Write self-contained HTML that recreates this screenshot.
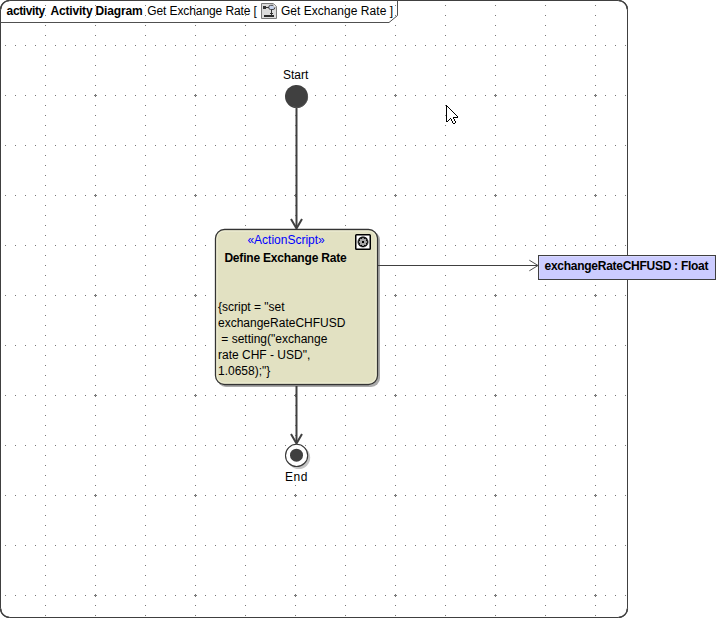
<!DOCTYPE html>
<html><head><meta charset="utf-8">
<style>
html,body{margin:0;padding:0;background:#fff;width:716px;height:618px;overflow:hidden}
svg{display:block}
text{font-family:"Liberation Sans",sans-serif;font-size:12px}
</style></head><body>
<svg width="716" height="618" viewBox="0 0 716 618">
<defs>
<pattern id="gh" x="0" y="0" width="10" height="50" patternUnits="userSpaceOnUse"><rect x="5" y="45" width="1" height="1" fill="#777"/></pattern>
<pattern id="gv" x="0" y="0" width="50" height="10" patternUnits="userSpaceOnUse"><rect x="45" y="5" width="1" height="1" fill="#777"/></pattern>
<pattern id="gp" x="0" y="0" width="100" height="100" patternUnits="userSpaceOnUse"><rect x="94" y="95" width="3" height="1" fill="#777"/><rect x="95" y="94" width="1" height="3" fill="#777"/></pattern>
</defs>
<g shape-rendering="crispEdges">
<rect x="1" y="1" width="625" height="616" fill="url(#gh)"/>
<rect x="1" y="1" width="625" height="616" fill="url(#gv)"/>
<rect x="1" y="1" width="625" height="616" fill="url(#gp)"/>
</g>
<!-- frame -->
<rect x="0.5" y="0.5" width="627" height="617" rx="9" ry="9" fill="none" stroke="#404040" stroke-width="1"/>
<path d="M0.6 9.5 A8.9 8.9 0 0 1 9.5 0.6 M618.5 0.6 A8.9 8.9 0 0 1 627.4 9.5 M627.4 608.5 A8.9 8.9 0 0 1 618.5 617.4 M9.5 617.4 A8.9 8.9 0 0 1 0.6 608.5" fill="none" stroke="#404040" stroke-width="1.5"/>
<path d="M0.5 22.5 H389 L397.5 15.5 V0.5" fill="none" stroke="#505050" stroke-width="1"/>
<text id="t1" x="6.6" textLength="38.66" lengthAdjust="spacing" y="15" font-weight="bold">activity</text>
<text id="t2" x="50.4" textLength="92.20" lengthAdjust="spacing" y="15" font-weight="bold">Activity Diagram</text>
<text id="t3" x="147.3" textLength="109.6" lengthAdjust="spacing" y="15">Get Exchange Rate [</text>
<text id="t4" x="280.9" textLength="112.21" lengthAdjust="spacing" y="15">Get Exchange Rate ]</text>
<!-- header icon -->
<g>
<path d="M261.5 3.5 H273.5 L276.5 6.5 V18.5 H261.5 Z" fill="#dcdcdc" stroke="#7a7a7a"/>
<path d="M273 3 L277 7 V3 Z" fill="#fff"/>
<g shape-rendering="crispEdges">
<rect x="263" y="6" width="3" height="3" fill="#333"/>
<rect x="266" y="7" width="3" height="1" fill="#333"/>
<rect x="271" y="10" width="1" height="5" fill="#333"/>
<rect x="270" y="13" width="3" height="1" fill="#333"/>
<rect x="264" y="15" width="10" height="2" fill="#2a2a2a"/>
</g>
<rect x="268.8" y="5.3" width="6" height="4.2" rx="1.8" fill="#c8d4ee" stroke="#333" stroke-width="0.9"/>
<path d="M273.5 3.5 V7 H276.5 Z" fill="#fff" stroke="#bbb" stroke-width="0.8"/>
<path d="M273.5 3.5 L276.8 6.8" stroke="#888" fill="none" stroke-width="0.9"/>
</g>
<!-- start -->
<text id="t5" x="283" y="79">Start</text>
<circle cx="296.5" cy="96.5" r="11.5" fill="#404040"/>
<path d="M307.2 94 A10.6 10.6 0 0 1 293 106.6" fill="none" stroke="#5c5c5c" stroke-width="0.7"/>
<line x1="296.5" y1="108" x2="296.5" y2="228" stroke="#404040" stroke-width="2"/>
<path d="M291 219 L296.5 228.5 L302 219" fill="none" stroke="#404040" stroke-width="2"/>
<!-- action -->
<rect x="217" y="231" width="163" height="156" rx="9" fill="#aaa"/>
<rect x="215.5" y="229.5" width="162" height="155" rx="9" fill="#e2e1c2" stroke="#333" stroke-width="1.3"/>
<rect x="217" y="231" width="159" height="152" rx="7.5" fill="none" stroke="#eeeed6" stroke-width="1"/>
<text id="t6" x="247.4" textLength="77.38" lengthAdjust="spacing" y="244" fill="#0000ff">«ActionScript»</text>
<text id="t7" x="224.4" textLength="122.25" lengthAdjust="spacing" y="262" font-weight="bold">Define Exchange Rate</text>
<text id="t8" x="218" y="311">{script = "set</text>
<text id="t9" x="218" y="327">exchangeRateCHFUSD</text>
<text id="t10" x="218" y="343" xml:space="preserve" style="white-space:pre"> = setting("exchange</text>
<text id="t11" x="218" y="359">rate CHF - USD",</text>
<text id="t12" x="218" y="375">1.0658);"}</text>
<!-- gear icon -->
<rect x="355.75" y="234.75" width="14.5" height="14.5" rx="0.8" fill="#fff" stroke="#000" stroke-width="1.5"/>
<path d="M367.78 240.83 L367.78 242.97 L366.65 243.27 L366.55 243.51 L367.14 244.53 L365.63 246.04 L364.61 245.45 L364.37 245.55 L364.07 246.68 L361.93 246.68 L361.63 245.55 L361.39 245.45 L360.37 246.04 L358.86 244.53 L359.45 243.51 L359.35 243.27 L358.22 242.97 L358.22 240.83 L359.35 240.53 L359.45 240.29 L358.86 239.27 L360.37 237.76 L361.39 238.35 L361.63 238.25 L361.93 237.12 L364.07 237.12 L364.37 238.25 L364.61 238.35 L365.63 237.76 L367.14 239.27 L366.55 240.29 L366.65 240.53 Z" fill="#a8a8a8" stroke="#000" stroke-width="1.15"/>
<rect x="362" y="241" width="2" height="2" fill="#000"/>
<!-- bottom flow -->
<line x1="296.5" y1="386" x2="296.5" y2="443" stroke="#404040" stroke-width="2"/>
<path d="M291 434 L296.5 443.5 L302 434" fill="none" stroke="#404040" stroke-width="2"/>
<!-- end -->
<circle cx="298.8" cy="457.6" r="11.4" fill="#c4c4c4"/>
<circle cx="296.6" cy="455.4" r="11.1" fill="#fff" stroke="#383838" stroke-width="1.1"/>
<circle cx="296.5" cy="455.2" r="6.5" fill="#404040"/>
<text id="t13" x="285" textLength="22.36" lengthAdjust="spacing" y="481">End</text>
<!-- object flow -->
<line x1="378" y1="265.5" x2="538" y2="265.5" stroke="#404040" stroke-width="1"/>
<path d="M529.3 260.2 L538 265.5 L529.3 270.8" fill="none" stroke="#505050" stroke-width="1"/>
<rect x="538.5" y="255.5" width="177" height="24" fill="#ccccff" stroke="#404040"/>
<path d="M539.5 278 V256.5 H714" fill="none" stroke="#d8d8ff"/>
<text id="t14" x="544.5" textLength="164.00" lengthAdjust="spacing" y="270" font-weight="bold">exchangeRateCHFUSD : Float</text>
<!-- cursor -->
<g shape-rendering="crispEdges"><path d="M447 107h1v1h-1zM447 108h2v1h-2zM447 109h3v1h-3zM447 110h4v1h-4zM447 111h5v1h-5zM447 112h6v1h-6zM447 113h7v1h-7zM447 114h8v1h-8zM447 115h9v1h-9zM447 116h10v1h-10zM447 117h6v1h-6zM447 118h3v1h-3zM451 118h2v1h-2zM447 119h2v1h-2zM452 119h2v1h-2zM447 120h1v1h-1zM452 120h2v1h-2zM453 121h2v1h-2zM453 122h2v1h-2z" fill="#fff"/><path d="M446 105h1v1h-1zM446 106h2v1h-2zM446 107h1v1h-1zM448 107h1v1h-1zM446 108h1v1h-1zM449 108h1v1h-1zM446 109h1v1h-1zM450 109h1v1h-1zM446 110h1v1h-1zM451 110h1v1h-1zM446 111h1v1h-1zM452 111h1v1h-1zM446 112h1v1h-1zM453 112h1v1h-1zM446 113h1v1h-1zM454 113h1v1h-1zM446 114h1v1h-1zM455 114h1v1h-1zM446 115h1v1h-1zM456 115h1v1h-1zM446 116h1v1h-1zM457 116h1v1h-1zM446 117h1v1h-1zM453 117h5v1h-5zM446 118h1v1h-1zM450 118h1v1h-1zM453 118h1v1h-1zM446 119h1v1h-1zM449 119h1v1h-1zM451 119h1v1h-1zM454 119h1v1h-1zM446 120h1v1h-1zM448 120h1v1h-1zM451 120h1v1h-1zM454 120h1v1h-1zM446 121h2v1h-2zM452 121h1v1h-1zM455 121h1v1h-1zM452 122h1v1h-1zM455 122h1v1h-1zM453 123h2v1h-2z" fill="#000"/></g>
</svg>
</body></html>
